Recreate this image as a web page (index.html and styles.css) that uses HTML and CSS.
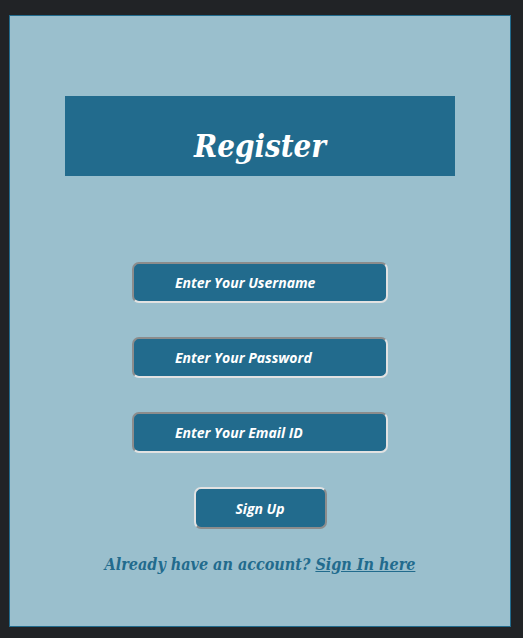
FILE: index.html
```html
<!DOCTYPE html>
<html>
<head>
<meta charset="utf-8">
<link rel="stylesheet" href="styles.css">
</head>
<body>
<div class="card">
  <div class="header"><h1 class="title">Register</h1></div>
  <form class="form">
    <input class="field" type="text" placeholder="Enter Your Username">
    <input class="field" type="password" placeholder="Enter Your Password">
    <input class="field" type="email" placeholder="Enter Your Email ID">
    <button class="btn" type="button">Sign Up</button>
  </form>
  <p class="note">Already have an account? <a class="link" href="#">Sign In here</a></p>
</div>
</body>
</html>
```
FILE: styles.css
```css
html, body {
  margin: 0;
  padding: 0;
  background: #212326;
}
body {
  padding: 15px 0 0 9px;
  width: 523px;
  height: 638px;
  box-sizing: border-box;
}
.card {
  width: 502px;
  height: 612px;
  box-sizing: border-box;
  border: 1px solid #226b8d;
  background: #9abfcd;
  padding-top: 80px;
  display: flex;
  flex-direction: column;
  align-items: center;
}
.header {
  width: 390px;
  height: 80px;
  background: #226b8d;
  display: flex;
  align-items: center;
  justify-content: center;
}
.title {
  margin: 0;
  padding-top: 20px;
  font-family: "DejaVu Serif Condensed", "DejaVu Serif", serif;
  font-weight: bold;
  font-style: italic;
  font-size: 31px;
  color: #ffffff;
}
.form {
  margin-top: 86px;
  display: flex;
  flex-direction: column;
  align-items: center;
  gap: 34px;
}
.field {
  width: 256px;
  height: 41px;
  box-sizing: border-box;
  border: 2px solid;
  border-color: #8c8c8c #e2e2e2 #e2e2e2 #8c8c8c;
  border-radius: 7px;
  background: #226b8d;
  padding: 0 0 0 41px;
  font-family: "Open Sans", sans-serif;
  font-weight: bold;
  font-style: italic;
  font-size: 14px;
  color: #ffffff;
  outline: none;
}
.field::placeholder {
  color: #ffffff;
  opacity: 1;
}
.btn {
  width: 133px;
  height: 42px;
  box-sizing: border-box;
  border: 2px solid;
  border-color: #e2e2e2 #8c8c8c #8c8c8c #e2e2e2;
  border-radius: 7px;
  background: #226b8d;
  font-family: "Open Sans", sans-serif;
  font-weight: bold;
  font-style: italic;
  font-size: 14px;
  color: #ffffff;
}
.note {
  margin: 26px 0 0;
  font-family: "DejaVu Serif Condensed", "DejaVu Serif", serif;
  font-weight: bold;
  font-style: italic;
  font-size: 16px;
  color: #226b8d;
}
.link {
  color: #226b8d;
  text-decoration: underline;
}
```
